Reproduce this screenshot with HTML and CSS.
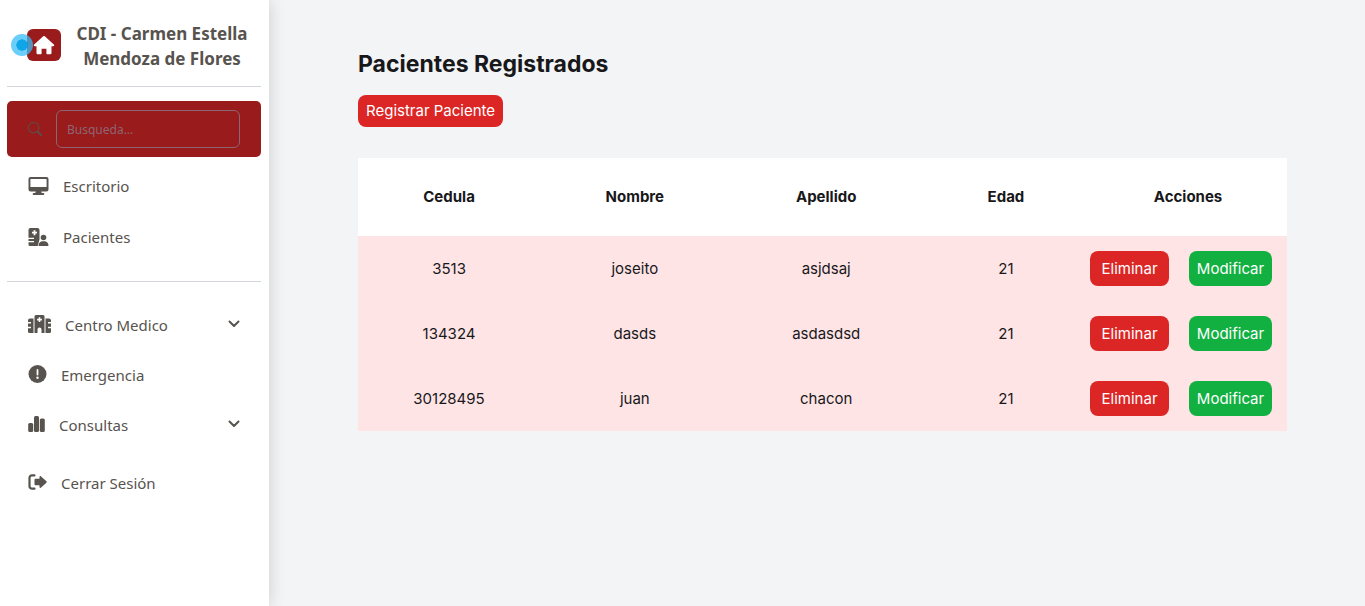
FILE: index.html
```html
<!DOCTYPE html>
<html lang="es">
<head>
<meta charset="utf-8">
<title>Pacientes Registrados</title>
<link rel="stylesheet" href="styles.css">
</head>
<body>
<aside class="sidebar">
  <header class="brand">
    <span class="brand-mark">
      <svg viewBox="0 0 22 20" width="22" height="20" fill="currentColor" aria-hidden="true"><path d="M10.200 1.300a1.200 1.200 0 0 1 1.600 0l9 8.200c.8.700.4 1.700-.6 1.700H18.500V18a1.200 1.200 0 0 1-1.200 1.200h-3.100a.8.8 0 0 1-.8-.8v-4.600H8.600v4.600a.8.8 0 0 1-.8.800H4.700A1.200 1.200 0 0 1 3.500 18v-6.800H1.800c-1 0-1.400-1-.6-1.700z"/></svg>
      <span class="ping"></span>
    </span>
    <h1 class="brand-name">CDI - Carmen Estella Mendoza de Flores</h1>
  </header>
  <hr class="rule">
  <label class="search">
    <svg viewBox="0 0 16 16" width="14" height="14" fill="currentColor" aria-hidden="true"><path d="M11.742 10.344a6.500 6.500 0 1 0-1.397 1.398l3.850 3.850a1 1 0 0 0 1.415-1.414zM12 6.500a5.500 5.500 0 1 1-11 0 5.500 5.500 0 0 1 11 0"/></svg>
    <input class="search-input" type="text" placeholder="Busqueda..." aria-label="Busqueda">
  </label>
  <nav class="menu">
    <div class="group">
      <a class="item" href="#">
        <svg viewBox="0 0 21 18" width="21" height="18" aria-hidden="true"><path fill="currentColor" fill-rule="evenodd" d="M2.500 0h16A2 2 0 0 1 20.500 2v10.500a2 2 0 0 1-2 2h-5.300l.5 1.500h1.600a1 1 0 0 1 0 2H5.700a1 1 0 0 1 0-2h1.600l.5-1.500H2.500a2 2 0 0 1-2-2V2a2 2 0 0 1 2-2zm.2 2a.5.5 0 0 0-.3.500v7.500h16.200V2.500a.5.5 0 0 0-.5-.500z"/></svg>
        <span>Escritorio</span>
      </a>
      <a class="item" href="#">
        <svg viewBox="0 0 21 18" width="21" height="18" fill="currentColor" aria-hidden="true"><path fill-rule="evenodd" d="M2 0h7.500a2 2 0 0 1 2 2v9.500l-1.800 6.500H2a1.500 1.500 0 0 1-1.500-1.500v-2.200H6v-1.400H.5v-1.800H6V9.700H.5V2A2 2 0 0 1 2 0zm3.600 2.200v1.600H4v1.800h1.600v1.600h1.800V5.600H9V3.800H7.400V2.200z"/><circle cx="15.500" cy="9.500" r="2.800"/><path d="M11 18c-.4 0-.6-.3-.5-.7.4-2.500 2-4 4-4h2c2 0 3.700 1.500 4 4 0 .4-.2.7-.5.7z"/></svg>
        <span>Pacientes</span>
      </a>
    </div>
    <hr class="rule">
    <div class="group compact">
      <button class="item" type="button">
        <svg viewBox="0 0 23 18" width="23" height="18" fill="currentColor" aria-hidden="true"><path fill-rule="evenodd" d="M8 0h7a1.500 1.500 0 0 1 1.500 1.500V18h-3v-3.500a2 2 0 0 0-4 0V18h-3V1.500A1.500 1.500 0 0 1 8 0zm2.700 2.200v1.600H9.100v1.600h1.600V7h1.600V5.400h1.600V3.800h-1.600V2.200z"/><path d="M2 3.500h3.500V18H1.500A1.500 1.500 0 0 1 0 16.500v-3.200h3v-1.500H0V8.500h3V7H0V5.500a2 2 0 0 1 2-2zM21 3.500h-3.500V18h4a1.500 1.500 0 0 0 1.500-1.500v-3.200h-3v-1.500h3V8.500h-3V7h3V5.500a2 2 0 0 0-2-2z"/></svg>
        <span>Centro Medico</span>
        <svg class="chevron" viewBox="0 0 12 8" width="12" height="8" aria-hidden="true"><path d="M1.500 1.500 6 6l4.500-4.500"/></svg>
      </button>
      <a class="item" href="#">
        <svg viewBox="0 0 19 18" width="19" height="18" aria-hidden="true"><circle cx="9.500" cy="9" r="9" fill="currentColor"/><path d="M9.500 5v4.500" stroke="#fff" stroke-width="1.800" stroke-linecap="round"/><circle cx="9.500" cy="12.800" r="1.200" fill="#fff"/></svg>
        <span>Emergencia</span>
      </a>
      <button class="item" type="button">
        <svg viewBox="0 0 17 16" width="17" height="16" fill="currentColor" aria-hidden="true"><rect x=".2" y="7" width="5" height="9" rx="1.500"/><rect x="6" y="0" width="5" height="16" rx="1.500"/><rect x="11.800" y="2.500" width="5" height="13.500" rx="1.500"/></svg>
        <span>Consultas</span>
        <svg class="chevron" viewBox="0 0 12 8" width="12" height="8" aria-hidden="true"><path d="M1.500 1.500 6 6l4.500-4.500"/></svg>
      </button>
      <a class="item logout" href="#">
        <svg viewBox="0 0 19 16" width="19" height="16" aria-hidden="true"><path d="M6.500 1.300H4A2.500 2.500 0 0 0 1.500 3.800v8.400A2.500 2.500 0 0 0 4 14.700h2.500" fill="none" stroke="currentColor" stroke-width="2.200" stroke-linecap="round"/><path d="M6.500 5.800a1 1 0 0 1 1-1h4V3c0-.9 1-1.200 1.600-.6l5.300 4.900a1 1 0 0 1 0 1.400l-5.300 4.900c-.6.600-1.600.3-1.600-.6v-1.800h-4a1 1 0 0 1-1-1z" fill="currentColor"/></svg>
        <span>Cerrar Sesión</span>
      </a>
    </div>
  </nav>
</aside>
<main class="content">
  <h2 class="title">Pacientes Registrados</h2>
  <button class="btn register" type="button">Registrar Paciente</button>
  <table class="patients">
    <colgroup><col class="col-id"><col class="col-name"><col class="col-last"><col class="col-age"><col class="col-actions"></colgroup>
    <thead>
      <tr><th>Cedula</th><th>Nombre</th><th>Apellido</th><th>Edad</th><th>Acciones</th></tr>
    </thead>
    <tbody>
      <tr><td>3513</td><td>joseito</td><td>asjdsaj</td><td>21</td><td><div class="actions"><button class="btn delete" type="button">Eliminar</button><button class="btn edit" type="button">Modificar</button></div></td></tr>
      <tr><td>134324</td><td>dasds</td><td>asdasdsd</td><td>21</td><td><div class="actions"><button class="btn delete" type="button">Eliminar</button><button class="btn edit" type="button">Modificar</button></div></td></tr>
      <tr><td>30128495</td><td>juan</td><td>chacon</td><td>21</td><td><div class="actions"><button class="btn delete" type="button">Eliminar</button><button class="btn edit" type="button">Modificar</button></div></td></tr>
    </tbody>
  </table>
</main>
</body>
</html>
```
FILE: styles.css
```css
* { box-sizing: border-box; }

body {
  display: flex;
  min-height: 100vh;
  margin: 0;
  background: #f3f4f6;
  color: #18181b;
  font: 15px/20px Inter, sans-serif;
}

button, input { font: inherit; }

.sidebar {
  flex: 0 0 269px;
  min-width: 0;
  padding: 21px 8px 0 7px;
  background: #fff;
  color: #57534e;
  font: 15px/24px "Noto Sans", sans-serif;
  box-shadow: 0 0 16px rgba(0, 0, 0, 0.16);
}

.brand {
  display: flex;
  align-items: center;
  gap: 10px;
  padding: 0 8px 0 20px;
}

.brand-mark {
  position: relative;
  display: grid;
  place-items: center;
  flex: 0 0 34px;
  height: 32px;
  margin-bottom: 2px;
  border-radius: 6px;
  background: #991b1b;
  color: #fff;
}

.ping {
  position: absolute;
  top: 5px;
  left: -16px;
  width: 22px;
  height: 22px;
  border: 5px solid rgba(56, 189, 248, 0.75);
  border-radius: 50%;
  background: #0ea5e9;
  background-clip: padding-box;
}

.brand-name {
  flex: 1;
  margin: 0;
  font-size: 17px;
  line-height: 25px;
  font-weight: 700;
  text-align: center;
}

.rule {
  height: 1px;
  margin: 15px 0 14px;
  border: 0;
  background: #d1d5db;
}

.search {
  display: flex;
  align-items: center;
  gap: 14px;
  padding: 9px 21px;
  border-radius: 5px;
  background: #991b1b;
}

.search svg { flex: none; }

.search-input {
  flex: 1;
  width: 100%;
  min-width: 0;
  height: 38px;
  padding: 0 10px;
  border: 1px solid #8d6673;
  border-radius: 6px;
  background: transparent;
  color: #fff;
  font-size: 12px;
}

.search-input::placeholder { color: #8d6673; opacity: 1; }

.menu { padding-top: 4px; }

.menu .rule { margin: 18px 0; }

.item {
  display: flex;
  align-items: center;
  gap: 14px;
  width: 100%;
  min-height: 51px;
  padding: 0 21px 2px;
  border: 0;
  background: none;
  color: inherit;
  text-align: left;
  text-decoration: none;
}

.item span { padding-top: 1px; }

.compact .item { min-height: 50px; }

.chevron {
  margin-left: auto;
  fill: none;
  stroke: currentColor;
  stroke-width: 2;
  stroke-linecap: round;
  stroke-linejoin: round;
}

.compact .logout { margin-top: 8px; }

.content {
  flex: 1;
  min-width: 0;
  padding: 48px 78px 48px 89px;
}

.title {
  margin: 0 0 15px;
  font-size: 23px;
  line-height: 32px;
  font-weight: 700;
}

.btn {
  padding: 0 8px;
  border: 0;
  border-radius: 8px;
  color: #fff;
  line-height: 35px;
}

.register { display: block; line-height: 32px; background: #dc2626; }
.delete { flex: 79; background: #dc2626; }
.edit { flex: 83; background: #11b040; }

.patients {
  width: 100%;
  margin-top: 31px;
  border-collapse: collapse;
  table-layout: fixed;
  background: #fff;
  text-align: center;
}

.patients th { height: 78px; padding: 0; font-weight: 700; }
.patients td { padding: 0; }
.patients tbody { background: #ffe4e6; }

.col-id { width: 19.6%; }
.col-name { width: 20.4%; }
.col-last { width: 20.8%; }
.col-age { width: 17.9%; }
.col-actions { width: 21.3%; }

.actions {
  display: flex;
  gap: 20px;
  padding: 15px 15px 15px 1px;
}

.actions .btn { min-width: 0; padding: 0; }
```
